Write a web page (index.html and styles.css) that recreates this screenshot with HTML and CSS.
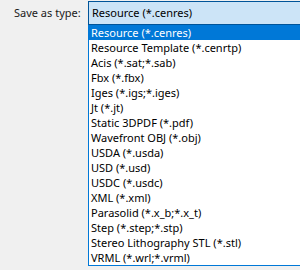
FILE: index.html
```html
<!DOCTYPE html>
<html>
<head>
  <title>Save as type</title>
  <link rel="stylesheet" href="styles.css">
</head>
<body>
  <div class="field">
    <label class="field-label">Save as type:</label>
    <div class="combo">
      <div class="combo-value">Resource (*.cenres)</div>
      <ul class="combo-list">
        <li class="selected">Resource (*.cenres)</li>
        <li>Resource Template (*.cenrtp)</li>
        <li>Acis (*.sat;*.sab)</li>
        <li>Fbx (*.fbx)</li>
        <li>Iges (*.igs;*.iges)</li>
        <li>Jt (*.jt)</li>
        <li>Static 3DPDF (*.pdf)</li>
        <li>Wavefront OBJ (*.obj)</li>
        <li>USDA (*.usda)</li>
        <li>USD (*.usd)</li>
        <li>USDC (*.usdc)</li>
        <li>XML (*.xml)</li>
        <li>Parasolid (*.x_b;*.x_t)</li>
        <li>Step (*.step;*.stp)</li>
        <li>Stereo Lithography STL (*.stl)</li>
        <li>VRML (*.wrl;*.vrml)</li>
      </ul>
    </div>
  </div>
</body>
</html>
```

FILE: styles.css
```css
body {
  margin: 0;
  background-color: #f0f0f0;
  font-family: "Noto Sans", "Open Sans", sans-serif;
  font-size: 11px;
  color: #000;
  width: 300px;
  height: 270px;
  overflow: hidden;
}

.field {
  display: flex;
  align-items: flex-start;
  padding-top: 1px;
}

.field-label {
  flex-shrink: 0;
  width: 74px;
  padding: 4px 0 0 14px;
  line-height: 16px;
  white-space: nowrap;
  color: #1a1a1a;
}

/* the combo runs on past the right edge of the window */
.combo {
  flex: 1;
  min-width: 0;
}

.combo-value {
  height: 22px;
  line-height: 21px;
  padding-left: 3px;
  background-color: #cce4f7;
  border: 1px solid #005499;
  border-right: none;
  white-space: nowrap;
}

.combo-list {
  list-style: none;
  margin: 0;
  padding: 0;
  background-color: #fff;
  border: 1px solid #0078d7;
  border-top: none;
  border-right: none;
}

.combo-list li {
  height: 15px;
  line-height: 15px;
  padding-left: 2px;
  white-space: nowrap;
}

.combo-list li.selected {
  background-color: #0078d7;
  color: #fff;
}
```
